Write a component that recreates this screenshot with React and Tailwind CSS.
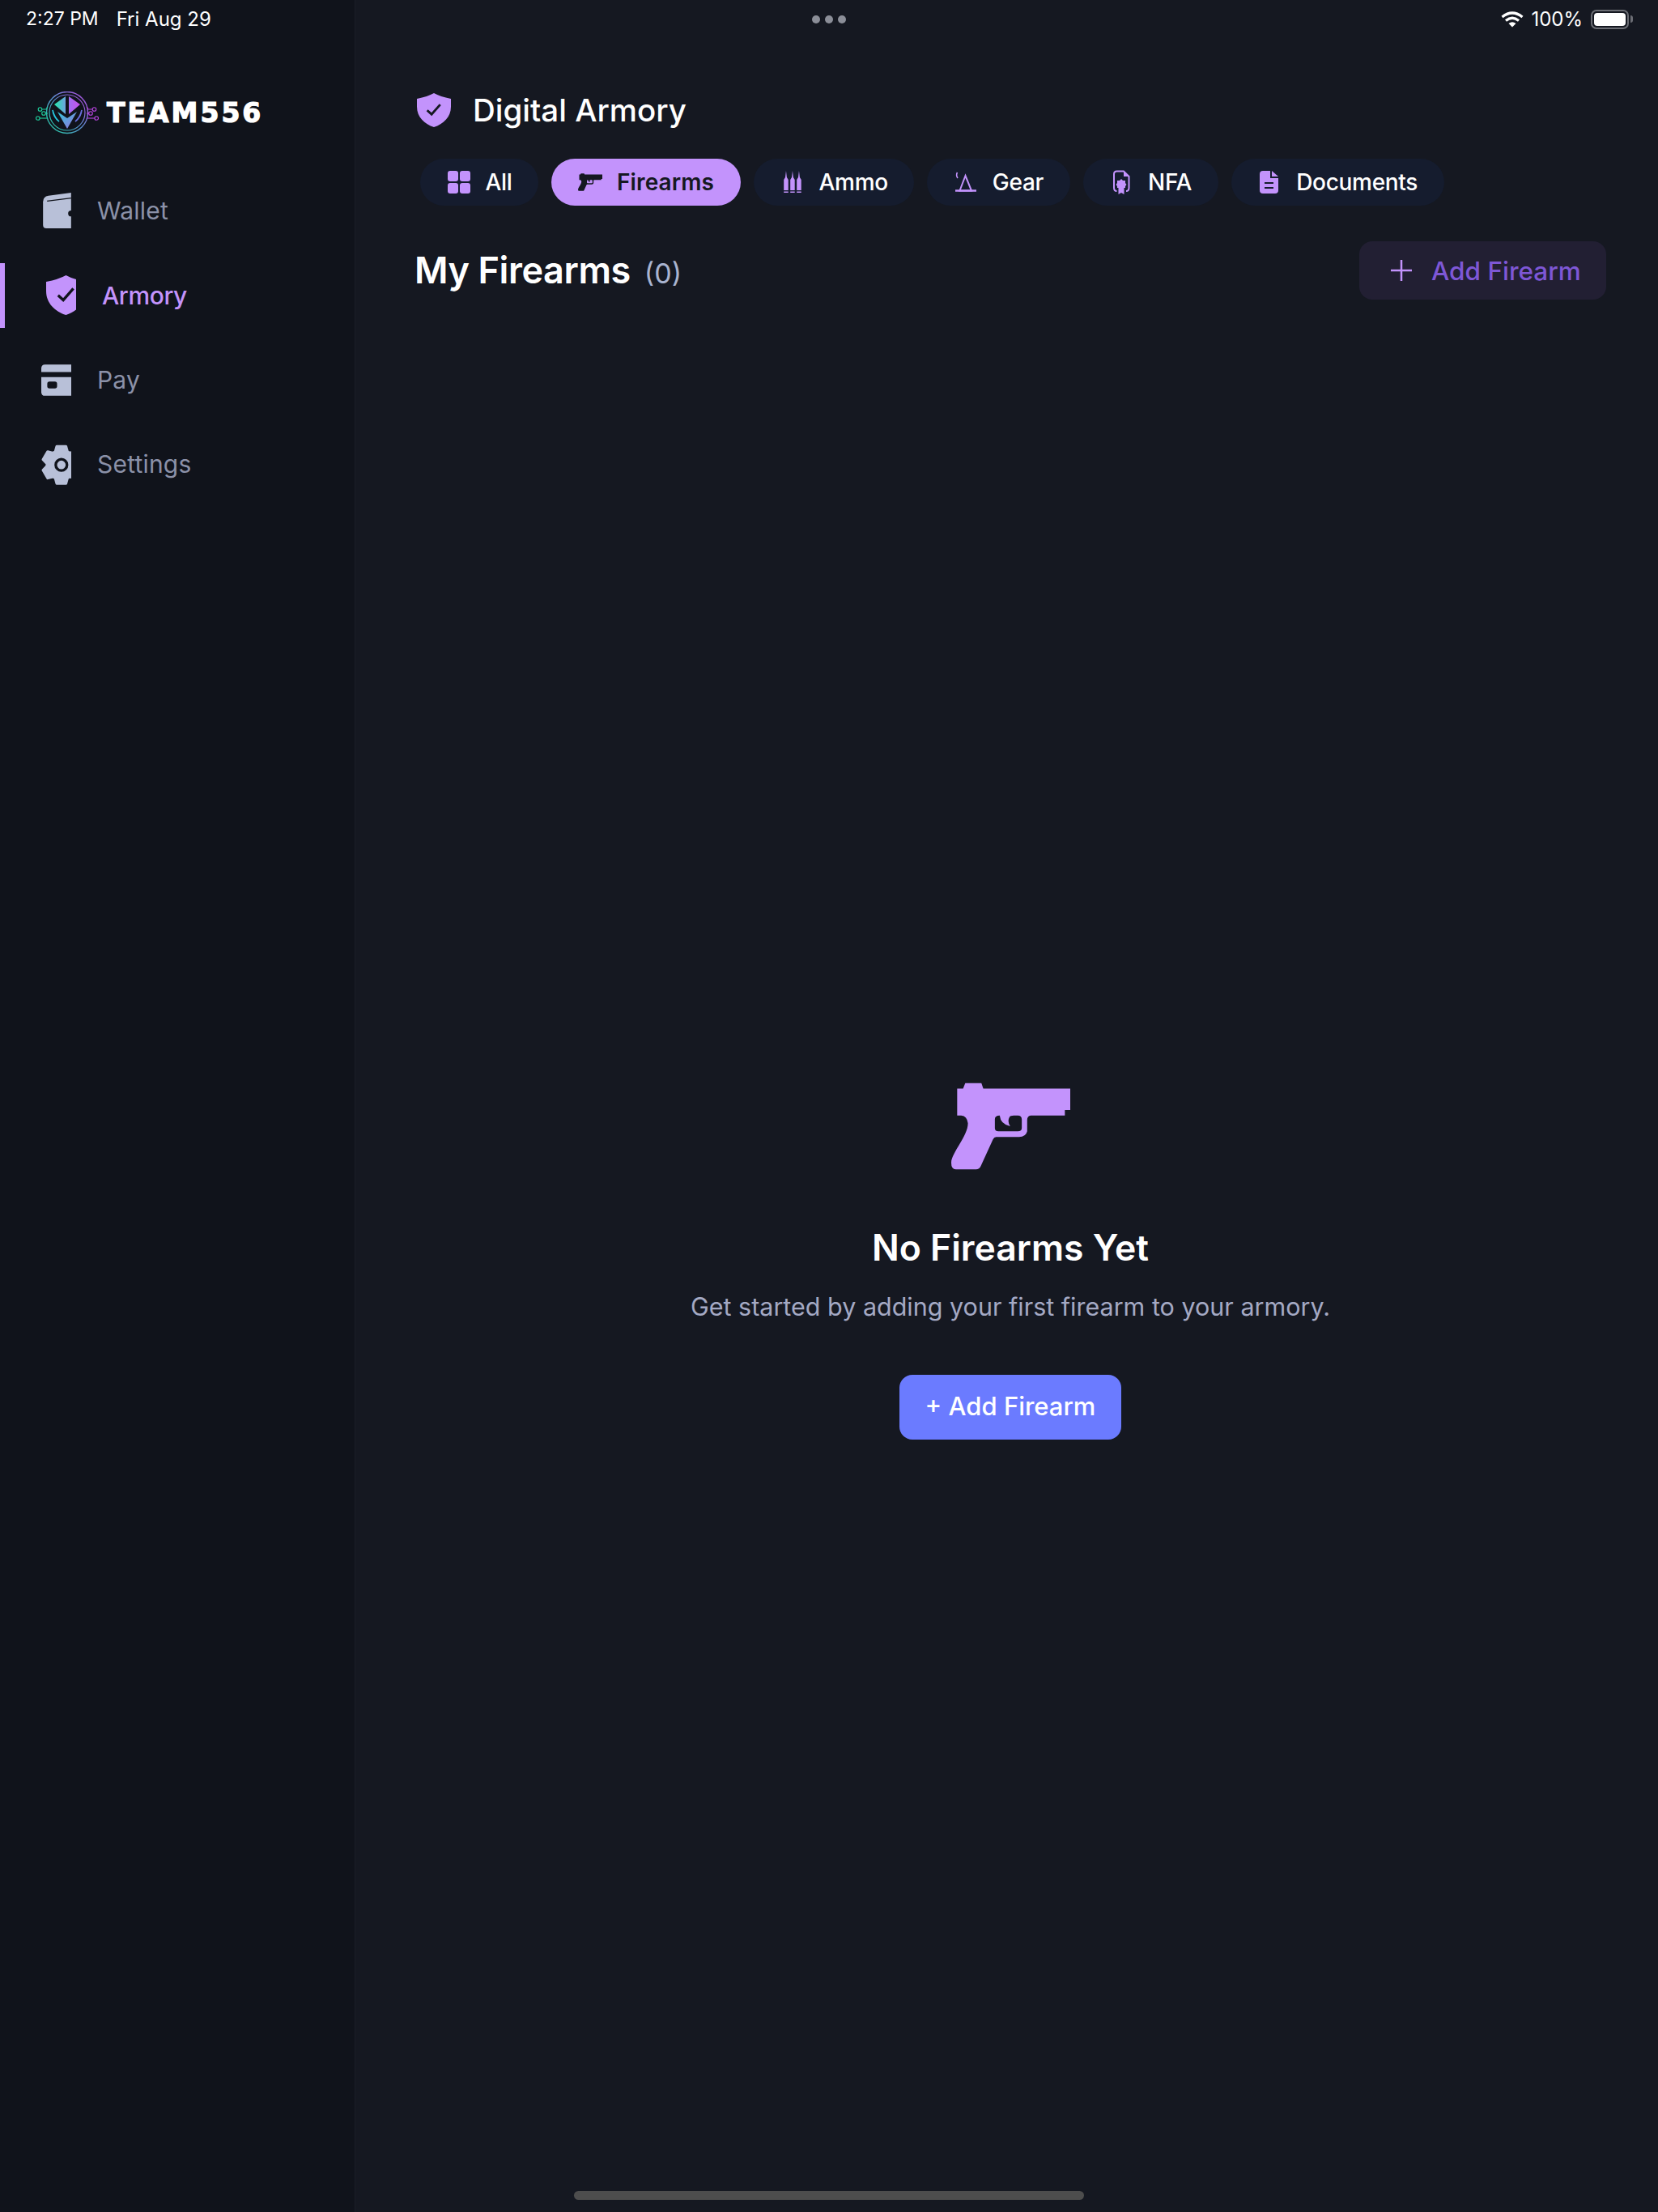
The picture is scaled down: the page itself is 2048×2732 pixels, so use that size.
import React from "react";

const FONT = "font-['Inter','Liberation_Sans',sans-serif]";

const tabs = [
  { name: "All", icon: <GridIcon /> },
  { name: "Firearms", icon: <PistolIcon className="w-[30px] h-[22px]" />, active: true },
  { name: "Ammo", icon: <AmmoIcon /> },
  { name: "Gear", icon: <GearIcon /> },
  { name: "NFA", icon: <NfaIcon /> },
  { name: "Documents", icon: <DocIcon /> },
];

// six tooth gear outline, centred on the hole of the settings icon
const gearPoints = [90, 150, 210, 270, 330, 30]
  .flatMap((deg) =>
    [
      [deg - 25, 54],
      [deg - 14, 71],
      [deg + 14, 71],
      [deg + 25, 54],
    ].map(([a, r]) => {
      const rad = (a * Math.PI) / 180;
      return `${(228 + r * Math.cos(rad)).toFixed(1)},${(1060 - r * Math.sin(rad)).toFixed(1)}`;
    })
  )
  .join(" ");

function ShieldIcon({ className, check = "#151821" }) {
  return (
    <svg viewBox="0 0 146 146" className={className}>
      <path
        d="M73 0 Q100 15 146 24 V58 C146 103 113 133 73 146 C33 133 0 103 0 58 V24 Q46 15 73 0 Z"
        fill="#c393fc"
      />
      <path d="M44 74 L63 91 L100 49" fill="none" stroke={check} strokeWidth="10" />
    </svg>
  );
}

function PistolIcon({ className }) {
  return (
    <svg viewBox="133 83 442 320" className={className} fill="currentColor">
      <path
        fillRule="evenodd"
        d="M155 103 H177 L185 83 H245 L252 103 H575 V183 H555 V203 H428 Q415 205 415 220 V262 Q410 283 385 283 H300 Q292 283 288 292 L243 390 Q237 403 225 403 H150 Q133 403 133 378 C135 340 195 280 195 232 Q192 205 170 203 H155 Z M295 217 Q295 203 313 203 Q316 235 352 243 Q340 225 350 208 Q352 203 365 203 H380 Q395 203 395 218 V250 Q395 262 380 262 H308 Q295 262 295 250 Z"
      />
    </svg>
  );
}

function GridIcon() {
  return (
    <div className="w-[30px] flex justify-center">
      <div className="grid grid-cols-2 gap-[2px] w-[28px] h-[28px]">
        <div className="rounded-[3px] bg-[#c393fc]" />
        <div className="rounded-[3px] bg-[#c393fc]" />
        <div className="rounded-[3px] bg-[#c393fc]" />
        <div className="rounded-[3px] bg-[#c393fc]" />
      </div>
    </div>
  );
}

function AmmoIcon() {
  const bullet = "M2.75 0 L3.7 8 L5.5 11 V24 H0 V11 L1.8 8 Z";
  return (
    <svg viewBox="0 0 30 28" className="w-[30px] h-[28px]" fill="#c393fc">
      {[4.2, 12.2, 20.2].map((x) => (
        <g key={x} transform={`translate(${x} 0)`}>
          <path d={bullet} />
          <rect x="0" y="25.5" width="5.5" height="1.5" />
        </g>
      ))}
    </svg>
  );
}

function GearIcon() {
  return (
    <svg viewBox="0 0 30 28" className="w-[30px] h-[28px]" fill="none" stroke="#c393fc">
      <path d="M14.5 6 L7.5 24.5 H22 Z" strokeWidth="2" />
      <path d="M2 24.5 H28" strokeWidth="2.5" />
      <path d="M4.5 2 Q2.5 5.5 5 9" strokeWidth="1.6" />
    </svg>
  );
}

function NfaIcon() {
  return (
    <svg viewBox="0 0 30 30" className="w-[30px] h-[30px]">
      <path
        d="M9.5 26 Q6 26 6 22 V5 Q6 1.5 9.5 1.5 H18 L24.5 8 V22 Q24.5 26 21 26"
        fill="none"
        stroke="#c393fc"
        strokeWidth="2"
      />
      <path d="M18 1.5 V8 H24.5 Z" fill="#c393fc" />
      <path
        d="M15 11 L17 13 L20 13 L20 16 L21.5 18 L20 20 L20 22 L17 22 L15 23 L13 22 L10 22 L10 20 L8.5 18 L10 16 L10 13 L13 13 Z"
        fill="#c393fc"
      />
      <path d="M11.5 22 H18.5 V30 L15 28 L11.5 30 Z" fill="#c393fc" />
    </svg>
  );
}

function DocIcon() {
  return (
    <svg viewBox="0 0 30 30" className="w-[30px] h-[30px]">
      <path
        d="M7 1 H16 V10 H26 V25 Q26 29 22 29 H7 Q3 29 3 25 V5 Q3 1 7 1 Z"
        fill="#c393fc"
      />
      <path d="M18 1 L26 8 H18 Z" fill="#c393fc" />
      <path d="M9 16 H20 M9 22 H20" stroke="#151c2e" strokeWidth="2.2" />
    </svg>
  );
}

function WalletIcon() {
  return (
    <svg viewBox="160 58 104 132" className="w-[35px] h-[44px]">
      <path d="M160 92 Q160 72 180 69 L264 58 V190 H172 Q160 190 160 178 Z" fill="#b8c0d8" />
      <path d="M175 89 L264 78" stroke="#10131b" strokeWidth="4" />
      <circle cx="264" cy="135" r="11" fill="#10131b" />
    </svg>
  );
}

function PayIcon() {
  return (
    <svg viewBox="154 689 110 115" className="w-[37px] h-[39px]" fill="#b8c0d8">
      <path d="M154 717 V703 Q154 689 168 689 H264 V717 Z" />
      <path d="M154 735 H264 V804 H168 Q154 804 154 790 Z" />
      <rect x="176" y="752" width="36" height="25" rx="8" fill="#10131b" />
    </svg>
  );
}

function SettingsIcon() {
  return (
    <svg viewBox="154 984 110 151" className="w-[37px] h-[50px]">
      <polygon points={gearPoints} fill="#b8c0d8" stroke="#b8c0d8" strokeWidth="10" strokeLinejoin="round" />
      <circle cx="228" cy="1060" r="21" fill="none" stroke="#10131b" strokeWidth="10" />
    </svg>
  );
}

function Logo() {
  return (
    <svg viewBox="0 0 78 53" className="w-[78px] h-[53px]" fill="none">
      <defs>
        <linearGradient id="ring" x1="0" y1="1" x2="1" y2="0">
          <stop offset="0" stopColor="#1ecf9c" />
          <stop offset="0.5" stopColor="#5b8fd0" />
          <stop offset="1" stopColor="#b845e0" />
        </linearGradient>
        <linearGradient id="kiteL" x1="0" y1="0.5" x2="1" y2="0.5">
          <stop offset="0" stopColor="#22e6a8" />
          <stop offset="1" stopColor="#6ea4e0" />
        </linearGradient>
        <linearGradient id="kiteR" x1="0" y1="0.5" x2="1" y2="0.5">
          <stop offset="0" stopColor="#a06df0" />
          <stop offset="1" stopColor="#c850e8" />
        </linearGradient>
        <linearGradient id="chev" x1="0" y1="0" x2="1" y2="1">
          <stop offset="0" stopColor="#30c8d8" />
          <stop offset="1" stopColor="#9a70e0" />
        </linearGradient>
      </defs>
      <circle cx="39" cy="26" r="25.5" stroke="url(#ring)" strokeWidth="1.4" />
      <circle cx="39" cy="26" r="22" stroke="url(#ring)" strokeWidth="1.2" />
      <path d="M37 6 V28 L23 16 Z" fill="url(#kiteL)" />
      <path d="M41 6 V28 L55 16 Z" fill="url(#kiteR)" />
      <path d="M27 25 L39 33 L51 25 L39 46 Z" fill="url(#chev)" />
      <path d="M21 23 Q23 32 29 37 Q22 32 21 23 Z" stroke="#27c8e0" strokeWidth="1.6" />
      <path d="M57 23 Q55 32 49 37 Q56 32 57 23 Z" stroke="#6a70e0" strokeWidth="1.6" />
      <g stroke="#1ecf9c" strokeWidth="1.1">
        <path d="M8 22 H13 L15 19" />
        <path d="M12 27 H15" />
        <path d="M5 33 H15" />
        <circle cx="5.5" cy="22" r="2.3" />
        <circle cx="10" cy="27" r="2.3" />
        <circle cx="2.8" cy="33" r="2.3" />
      </g>
      <g stroke="#b845e0" strokeWidth="1.1">
        <path d="M70 22 H65 L63 19" />
        <path d="M66 27 H63" />
        <path d="M73 33 H63" />
        <circle cx="72.5" cy="22" r="2.3" />
        <circle cx="68" cy="27" r="2.3" />
        <circle cx="75.2" cy="33" r="2.3" />
      </g>
    </svg>
  );
}

function NavItem({ icon, label, active }) {
  return (
    <div className="relative flex items-center h-20">
      {active && <div className="absolute left-0 top-0 bottom-0 w-[6px] bg-[#c393fc]" />}
      {active ? (
        <div className="flex items-center pl-[57px] gap-[32px]">
          <div className="w-[37px] h-[49px] overflow-hidden">
            <ShieldIcon className="w-[49px] h-[49px] max-w-none" check="#10131b" />
          </div>
          <span className="pt-[2px] text-[30px] font-medium tracking-[-0.4px] text-[#c393fc]">{label}</span>
        </div>
      ) : (
        <div className="flex items-center">
          <div className="w-[88px] flex justify-end">{icon}</div>
          <span className="ml-[32px] text-[30px] tracking-[0.2px] text-[#8b91a8]">{label}</span>
        </div>
      )}
    </div>
  );
}

function Tab({ name, icon, active }) {
  return (
    <div
      className={`h-[58px] flex items-center gap-[18px] rounded-full text-[28px] ${
        active
          ? "px-[33px] bg-[#c393fc] text-[#151821] font-semibold tracking-[0.1px]"
          : "px-[32.5px] bg-[#151c2e] text-white font-medium tracking-[-0.3px]"
      }`}
    >
      {icon}
      <span>{name}</span>
    </div>
  );
}

export default function App() {
  return (
    <div className={`relative w-[2048px] h-[2732px] flex overflow-hidden bg-[#151821] ${FONT}`}>
      {/* status bar */}
      <div className="absolute top-0 left-0 right-0 h-12 flex items-center justify-between pl-[32px] pr-[36px] text-white text-[24px]">
        <div className="flex gap-[22px]">
          <span className="text-[23px]">2:27 PM</span>
          <span>Fri Aug 29</span>
        </div>
        <div className="absolute left-[1003px] top-[19px] flex gap-[6px]">
          <div className="w-[10px] h-[10px] rounded-full bg-[#8b8e98]" />
          <div className="w-[10px] h-[10px] rounded-full bg-[#8b8e98]" />
          <div className="w-[10px] h-[10px] rounded-full bg-[#8b8e98]" />
        </div>
        <div className="flex items-center">
          <svg viewBox="0 0 28 20" className="w-[28px] h-[20px]" fill="none" stroke="white" strokeWidth="3.2">
            <path d="M1.5 7 Q14 -3 26.5 7" />
            <path d="M6 11.5 Q14 5 22 11.5" />
            <path d="M14 19.5 L9.5 15 Q14 11.5 18.5 15 Z" fill="white" stroke="none" />
          </svg>
          <span className="ml-[9px]">100%</span>
          <div className="ml-[10px] relative w-[47px] h-[24px] rounded-[7px] border-2 border-[#6b6d74] p-[2px]">
            <div className="w-full h-full rounded-[4px] bg-white" />
            <div className="absolute -right-[7px] top-[5px] w-[3px] h-[9px] rounded-r-sm bg-[#6b6d74]" />
          </div>
        </div>
      </div>

      {/* sidebar */}
      <aside className="w-[439px] shrink-0 bg-[#10131b] border-r border-[#1b1e27] pt-[113px]">
        <div className="flex items-center pl-[44px] h-[53px]">
          <Logo />
          <span className="ml-[10px] font-['DejaVu_Sans',sans-serif] font-bold text-[33px] text-white tracking-[3px] leading-none [-webkit-text-stroke:1.2px_white]">
            TEAM556
          </span>
        </div>
        <nav className="mt-[54px] flex flex-col gap-[24.5px]">
          <NavItem icon={<WalletIcon />} label="Wallet" />
          <NavItem label="Armory" active />
          <NavItem icon={<PayIcon />} label="Pay" />
          <NavItem icon={<SettingsIcon />} label="Settings" />
        </nav>
      </aside>

      {/* main */}
      <main className="flex-1 flex flex-col pt-[115px] pl-[73px] pr-[64px]">
        <div className="flex items-center h-[42px] pl-[3px]">
          <ShieldIcon className="w-[42px] h-[42px]" />
          <h1 className="ml-[27px] pt-[2px] text-[38.5px] font-medium text-white">Digital Armory</h1>
        </div>
        <div className="mt-[39px] ml-[7px] flex gap-4">
          {tabs.map((t) => (
            <Tab key={t.name} {...t} />
          ))}
        </div>
        <div className="mt-[44px] h-[72px] flex items-center justify-between">
          <div className="flex items-baseline">
            <h2 className="text-[45px] font-semibold tracking-[-0.4px] text-white">My Firearms</h2>
            <span className="ml-[17px] text-[34px] text-[#a9b4d0]">(0)</span>
          </div>
          <button className="w-[305px] h-[72px] flex items-center pl-[39px] gap-[24px] rounded-2xl bg-[#221f33] text-[31.5px] font-medium text-[#7e57d6]">
            <svg viewBox="0 0 26 26" className="w-[26px] h-[26px]" stroke="#c393fc" strokeWidth="2.5">
              <path d="M13 0 V26 M0 13 H26" />
            </svg>
            <span className="pt-[1px]">Add Firearm</span>
          </button>
        </div>

        <div className="mt-[967px] flex flex-col items-center">
          <PistolIcon className="w-[147px] h-[108px] text-[#c393fc]" />
          <h3 className="mt-[63px] text-[44.5px] font-semibold text-white">No Firearms Yet</h3>
          <p className="mt-[16px] text-[30.5px] text-[#a4a9c4]">
            Get started by adding your first firearm to your armory.
          </p>
          <button className="mt-[61px] w-[274px] h-[80px] rounded-2xl bg-[#6b7bff] text-[31px] font-medium text-white">
            + Add Firearm
          </button>
        </div>
      </main>

      {/* home indicator */}
      <div className="absolute left-[709px] top-[2706px] w-[630px] h-[11px] rounded-full bg-[#4d4d4d]" />
    </div>
  );
}
